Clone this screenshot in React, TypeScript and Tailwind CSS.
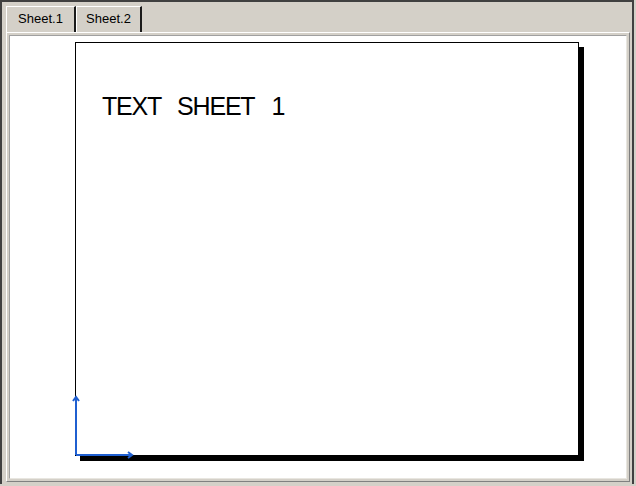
import React from "react";

export default function App() {
  return (
    <div className="w-[636px] h-[486px] bg-[#d4d0c8] overflow-hidden" style={{ fontFamily: '"Liberation Sans", Arial, sans-serif' }}>
      <div className="w-[634px] h-[484px] border-t-2 border-l-2 border-[#404040] border-r-2 border-r-[#404040] flex flex-col pl-[4px] pr-[2px] pt-[4px] pb-[2px]">
        {/* tabs */}
        <div className="flex items-end h-[26px] shrink-0">
          <div className="h-[26px] w-[70px] border-t border-l border-white border-r-2 border-r-[#1a1a1a] bg-[#d4d0c8] flex items-center justify-center text-[13px] text-black pb-[2px]">
            Sheet.1
          </div>
          <div className="h-[26px] w-[66px] border-t border-l border-white border-r-2 border-r-[#1a1a1a] bg-[#d4d0c8] flex items-center justify-center text-[13px] text-black pb-[2px]">
            Sheet.2
          </div>
        </div>
        {/* panel */}
        <div className="flex-1 border-t border-l border-white border-r border-b border-r-[#808080] border-b-[#808080] p-[2px] flex">
          <div className="flex-1 bg-white border-t border-l border-[#a0a0a0] border-r border-b border-r-[#e8e6e0] border-b-[#e8e6e0] pl-[65px] pt-[6px]">
            <div className="relative w-[504px] h-[414px] border border-black bg-white shadow-[5px_5px_0_#000] pt-[51px] pl-[26px]">
              <div className="flex items-baseline text-[25px] leading-[25px] text-black tracking-[-1.2px]">
                <span>TEXT</span>
                <span className="ml-[16px]">SHEET</span>
                <span className="ml-[17px]">1</span>
              </div>
              <svg
                className="absolute left-[-2px] bottom-[-3px] overflow-visible"
                width="62"
                height="64"
                viewBox="0 0 62 64"
              >
                <g stroke="#1f5fd0" strokeWidth="2" fill="none">
                  <line x1="2" y1="61" x2="2" y2="4" />
                  <polyline points="-1,7 2,3 5,7" />
                  <line x1="2" y1="61" x2="57" y2="61" />
                  <polyline points="54,58 58,61 54,64" />
                </g>
              </svg>
            </div>
          </div>
        </div>
      </div>
    </div>
  );
}
